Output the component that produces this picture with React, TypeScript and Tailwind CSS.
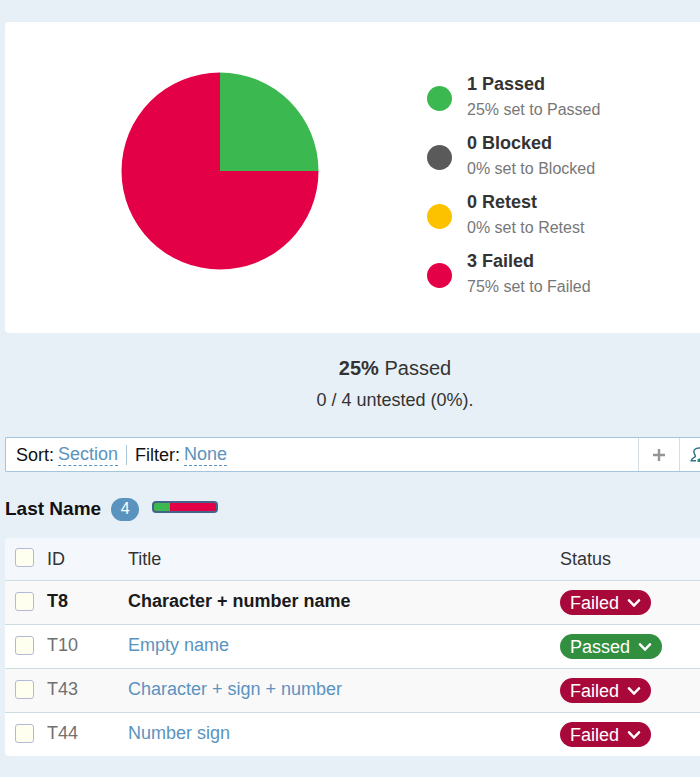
import React from "react";

const legend = [
  { count: 1, name: "Passed", percent: 25, color: "bg-[#3cb850]" },
  { count: 0, name: "Blocked", percent: 0, color: "bg-[#5a5a5a]" },
  { count: 0, name: "Retest", percent: 0, color: "bg-[#fcc200]" },
  { count: 3, name: "Failed", percent: 75, color: "bg-[#e40046]" },
];

const tests = [
  { id: "T8", title: "Character + number name", status: "Failed", active: true },
  { id: "T10", title: "Empty name", status: "Passed", active: false },
  { id: "T43", title: "Character + sign + number", status: "Failed", active: false },
  { id: "T44", title: "Number sign", status: "Failed", active: false },
];

const box =
  "block size-[19px] appearance-none rounded-[3px] border border-[#b4b9d8] bg-[#fffff0] checked:bg-[#5b93bf]";

function Pie() {
  return (
    <svg className="size-[198px] shrink-0" viewBox="0 0 198 198" role="img" aria-label="Test status chart">
      <path d="M99 99V.5A98.5 98.5 0 1 0 197.5 99Z" fill="#e40046" />
      <path d="M99 99V.5A98.5 98.5 0 0 1 197.5 99Z" fill="#3cb850" />
    </svg>
  );
}

function StatusButton({ status }: { status: string }) {
  return (
    <button
      type="button"
      className={`flex h-[25px] items-center gap-2 rounded-full px-[10px] text-white ${
        status === "Passed" ? "bg-[#338f40]" : "bg-[#a9093a]"
      }`}
    >
      {status}
      <svg className="h-2 w-[14px]" viewBox="0 0 14 8" fill="none" stroke="currentColor" strokeWidth="2.5" strokeLinecap="round">
        <path d="M2 1.300L7 6.500L12 1.300" />
      </svg>
    </button>
  );
}

export default function App() {
  return (
    <main className="min-h-screen overflow-x-hidden bg-[#e8f0f7] pt-[22px] pb-[21px] pl-[5px] font-['Liberation_Sans',Arial,sans-serif] text-[18px] leading-6 text-[#333]">
      <section className="flex items-start gap-[108px] rounded-l-[4px] bg-white pt-[50px] pb-8 pl-[116px]">
        <Pie />
        <ul className="flex flex-col gap-[7px]">
          {legend.map((item) => (
            <li key={item.name} className="flex items-center gap-[15px]">
              <span className={`size-[25px] rounded-full ${item.color}`} />
              <div>
                <p className="leading-6 font-bold">
                  {item.count} {item.name}
                </p>
                <p className="text-base leading-7 text-[#777]">
                  {item.percent}% set to {item.name}
                </p>
              </div>
            </li>
          ))}
        </ul>
      </section>

      <section className="mt-[19px] pl-[85px] text-center">
        <p className="text-xl leading-8">
          <strong>25%</strong> Passed
        </p>
        <p className="leading-8">0 / 4 untested (0%).</p>
      </section>

      <div className="mt-[21px] flex h-[35px] items-stretch rounded-l-[2px] border-y border-l border-[#a3c6dc] bg-white text-[#111]">
        <div className="flex grow items-center pl-[10px]">
          <span>Sort:</span>
          <a href="#sort" className="ml-1 border-b border-dashed border-[#5b93bf] leading-[21px] text-[#5b93bf]">
            Section
          </a>
          <span className="mx-2 h-5 w-px bg-[#aac8d8]" />
          <span>Filter:</span>
          <a href="#filter" className="ml-1 border-b border-dashed border-[#5b93bf] leading-[21px] text-[#5b93bf]">
            None
          </a>
        </div>
        <button type="button" aria-label="Add" className="flex w-[41px] items-center justify-center border-l border-[#d5dde2]">
          <svg className="size-3" viewBox="0 0 12 12" stroke="#929592" strokeWidth="2.4">
            <path d="M6 0V12M0 6H12" />
          </svg>
        </button>
        <button type="button" aria-label="Assign" className="w-[21px] overflow-hidden border-l border-[#d5dde2] pl-[10px]">
          <svg className="h-4 w-5 max-w-none" viewBox="0 0 20 16" fill="none" stroke="#34718a" strokeWidth="1.5">
            <path d="M14 5C14 2.500 12 1 9 1C5.500 1 3.500 3 4 5.500C4.200 7 5.500 8 5.300 9.300C5 10.800 1.500 10.500 1.200 13.800H6" />
            <path d="M7.500 15V12.500L10 11H16V15Z" fill="#218a74" stroke="none" />
          </svg>
        </button>
      </div>

      <div className="mt-[25px] flex h-6 items-center">
        <h2 className="text-[19px] font-bold text-[#111]">Last Name</h2>
        <span className="ml-[10px] flex h-[23px] w-7 items-center justify-center rounded-full bg-[#5b93bf] text-base text-white">4</span>
        <div className="mb-1 ml-[13px] flex h-3 w-[66px] overflow-hidden rounded-[4px] border-2 border-[#43638a] bg-[#e40046]">
          <span className="w-1/4 bg-[#3cb850]" />
        </div>
      </div>

      <table className="mt-[17px] w-full table-fixed border-separate border-spacing-0 overflow-hidden rounded-l-[4px] bg-white text-left">
        <colgroup>
          <col className="w-[42px]" />
          <col className="w-[81px]" />
          <col />
          <col className="w-[140px]" />
        </colgroup>
        <thead>
          <tr className="h-[43px] bg-[#f4f8fd]">
            <th className="border-b border-[#ccdbe3] pb-1 pl-[10px]">
              <input type="checkbox" aria-label="Select all tests" className={box} />
            </th>
            <th className="border-b border-[#ccdbe3] font-normal">ID</th>
            <th className="border-b border-[#ccdbe3] font-normal">Title</th>
            <th className="border-b border-[#ccdbe3] font-normal">Status</th>
          </tr>
        </thead>
        <tbody className="[&>tr:last-child>td]:border-b-0">
          {tests.map((test) => (
            <tr key={test.id} className="h-11 last:h-[43px] odd:bg-[#f9f9f9]">
              <td className="border-b border-[#ccdbe3] pb-[2px] pl-[10px]">
                <input type="checkbox" aria-label={`Select ${test.id}`} className={box} />
              </td>
              <td className={`border-b border-[#ccdbe3] pb-1 ${test.active ? "font-bold text-[#1a1a1a]" : "text-[#707070]"}`}>
                {test.id}
              </td>
              <td className="border-b border-[#ccdbe3] pb-1">
                <a href={`#${test.id}`} className={test.active ? "font-bold text-[#1a1a1a]" : "text-[#5b93bf]"}>
                  {test.title}
                </a>
              </td>
              <td className="border-b border-[#ccdbe3]">
                <StatusButton status={test.status} />
              </td>
            </tr>
          ))}
        </tbody>
      </table>
    </main>
  );
}
